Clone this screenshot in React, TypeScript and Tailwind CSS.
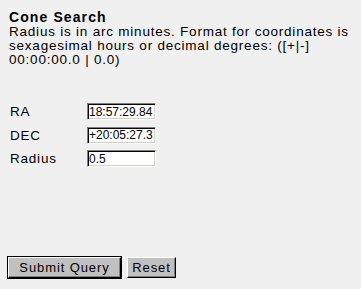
import React from "react"

const fields = [
  { label: "RA", name: "ra", value: "18:57:29.84" },
  { label: "DEC", name: "dec", value: "+20:05:27.3" },
  { label: "Radius", name: "radius", value: "0.5" },
]

export default function App() {
  return (
    <form
      onSubmit={(e) => e.preventDefault()}
      className="flex flex-col min-h-[289px] bg-[#f0f0f0] pl-[9px] pt-[9px] pb-[10px] text-[13.5px] tracking-[0.78px] text-black font-['Liberation_Sans',Arial,sans-serif]"
    >
      {/* Header */}
      <h3 className="text-[14px] leading-[16px] font-bold tracking-[1.1px]">Cone Search</h3>
      <p className="leading-[14px] whitespace-nowrap">
        Radius is in arc minutes. Format for coordinates is
        <br />
        sexagesimal hours or decimal degrees: ([+|-]
        <br />
        00:00:00.0 | 0.0)
      </p>

      {/* Fields */}
      <div className="mt-[36px] flex flex-col gap-[6.5px]">
        {fields.map((f) => (
          <div key={f.name} className="flex items-center h-[17px]">
            <label htmlFor={f.name} className="w-[78px] pl-[1px] leading-[17px]">
              {f.label}
            </label>
            <input
              id={f.name}
              defaultValue={f.value}
              className="w-[69px] h-[17px] px-[1px] bg-white text-[12px] tracking-normal leading-none outline-none border border-t-[#808080] border-l-[#808080] border-r-white border-b-white shadow-[inset_1px_1px_0_#000,inset_-1px_-1px_0_#d4d0c8]"
            />
          </div>
        ))}
      </div>

      {/* Buttons */}
      <div className="mt-auto flex items-center gap-[5px]">
        <button
          type="submit"
          className="ml-[-2px] w-[115px] h-[23px] bg-[#c0c0c0] border border-black text-[13px] tracking-[0.9px]"
        >
          <span className="flex items-center justify-center w-full h-full border border-t-white border-l-white border-r-black border-b-black shadow-[inset_-1px_-1px_0_#808080]">
            Submit Query
          </span>
        </button>
        <button
          type="reset"
          className="w-[49px] h-[21px] bg-[#c0c0c0] border border-t-white border-l-white border-r-black border-b-black shadow-[inset_-1px_-1px_0_#808080] text-[13px] tracking-[0.9px]"
        >
          Reset
        </button>
      </div>
    </form>
  )
}
